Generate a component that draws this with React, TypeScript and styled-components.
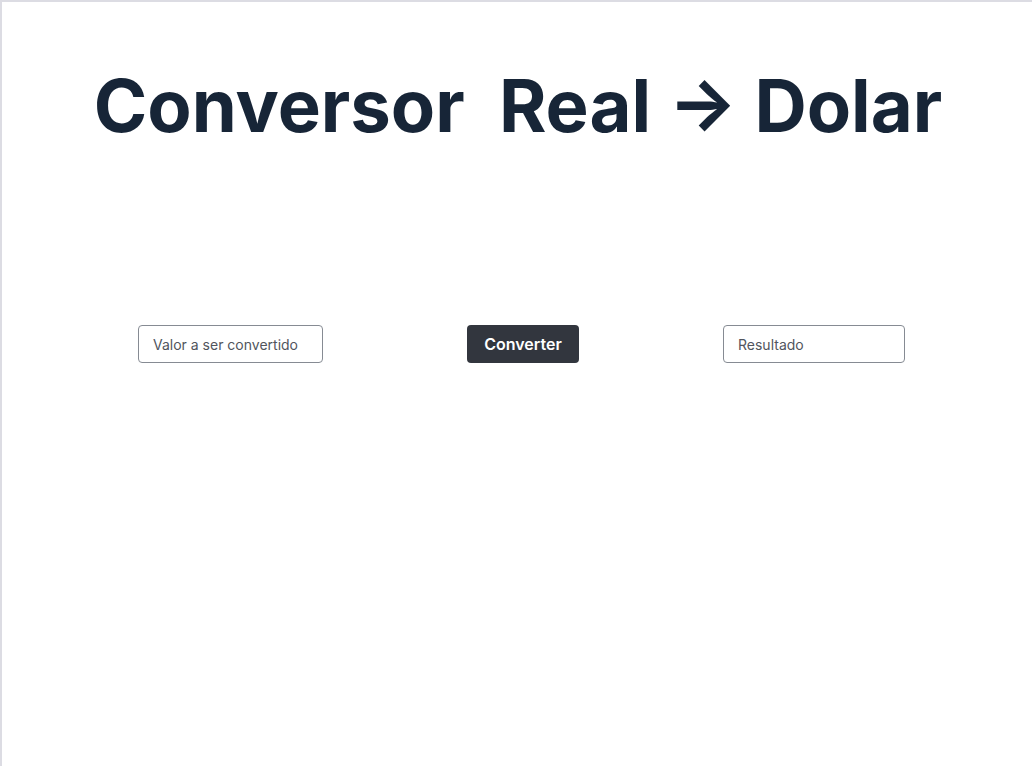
import React from "react";
import styled, { createGlobalStyle } from "styled-components";

const Global = createGlobalStyle`
  html, body { margin: 0; padding: 0; background: #ffffff; }
  body { font-family: Inter, "Noto Sans", sans-serif; }
  * { box-sizing: border-box; }
`;

const Page = styled.div`
  width: 1032px;
  height: 766px;
  border-top: 2px solid #dcdce3;
  border-left: 2px solid #dcdce3;
  background: #ffffff;
  display: flex;
  flex-direction: column;
`;

const Title = styled.h1`
  margin: 60px 0 0 0;
  padding-left: 2px;
  text-align: center;
  font-family: Inter, sans-serif;
  font-weight: 700;
  font-size: 72.4px;
  line-height: 87px;
  color: #172537;
  white-space: pre;
  letter-spacing: 0;
`;

const Row = styled.div`
  margin-top: 176px;
  display: flex;
  align-items: center;
  padding-left: 136px;
  gap: 144px;
`;

const Field = styled.input<{ $w: number }>`
  width: ${(p) => p.$w}px;
  height: 38px;
  border: 1px solid #868b93;
  border-radius: 4px;
  padding: 0 14px;
  font-family: Inter, sans-serif;
  font-size: 14px;
  color: #374151;
  background: #fff;
  outline: none;
  &::placeholder { color: #51555d; }
`;

const Button = styled.button`
  width: 112px;
  height: 38px;
  border: none;
  border-radius: 4px;
  background: #32363e;
  color: #ffffff;
  font-family: Inter, sans-serif;
  font-weight: 600;
  font-size: 16px;
  cursor: pointer;
`;

export default function App() {
  return (
    <>
      <Global />
      <Page>
        <Title>{"Conversor  Real \u2192 Dolar"}</Title>
        <Row>
          <Field $w={185} placeholder="Valor a ser convertido" />
          <Button>Converter</Button>
          <Field $w={182} placeholder="Resultado" readOnly />
        </Row>
      </Page>
    </>
  );
}
